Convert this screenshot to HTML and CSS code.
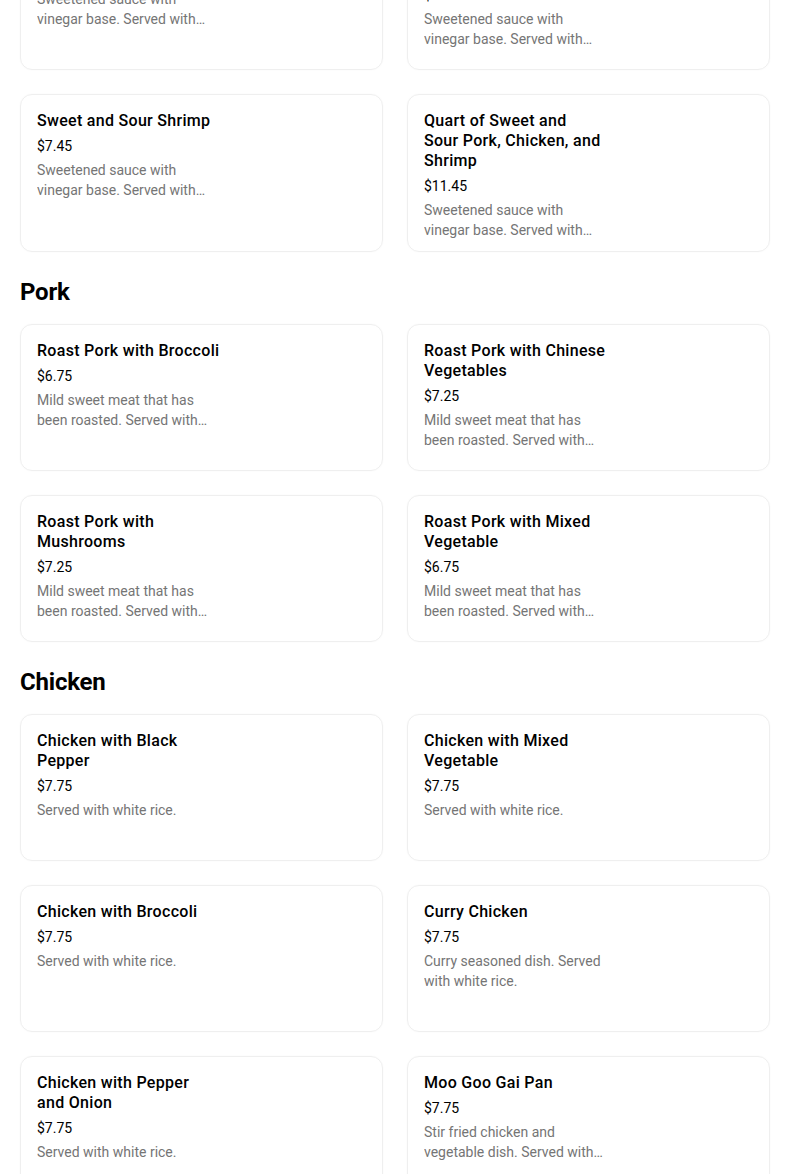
FILE: index.html
```html
<!DOCTYPE html>
<html lang="en">
<head>
<meta charset="utf-8">
<title>Menu</title>
<link rel="stylesheet" href="styles.css">
</head>
<body>
<main class="menu">
  <section class="section">
    <h2 class="section-title">Sweet and Sour</h2>
    <div class="grid">
      <article class="card"><div class="info"><h3 class="name">Sweet and Sour Pork</h3><p class="price">$7.45</p><p class="desc">Sweetened sauce with vinegar base. Served with white rice.</p></div></article>
      <article class="card"><div class="info"><h3 class="name">Sweet and Sour Chicken and Shrimp</h3><p class="price">$7.45</p><p class="desc">Sweetened sauce with vinegar base. Served with white rice.</p></div></article>
      <article class="card"><div class="info"><h3 class="name">Sweet and Sour Shrimp</h3><p class="price">$7.45</p><p class="desc">Sweetened sauce with vinegar base. Served with white rice.</p></div></article>
      <article class="card"><div class="info"><h3 class="name">Quart of Sweet and<br>Sour Pork, Chicken, and Shrimp</h3><p class="price">$11.45</p><p class="desc">Sweetened sauce with vinegar base. Served with white rice.</p></div></article>
    </div>
  </section>
  <section class="section">
    <h2 class="section-title">Pork</h2>
    <div class="grid">
      <article class="card"><div class="info"><h3 class="name">Roast Pork with Broccoli</h3><p class="price">$6.75</p><p class="desc">Mild sweet meat that has been roasted. Served with white rice.</p></div></article>
      <article class="card"><div class="info"><h3 class="name">Roast Pork with Chinese Vegetables</h3><p class="price">$7.25</p><p class="desc">Mild sweet meat that has been roasted. Served with white rice.</p></div></article>
      <article class="card"><div class="info"><h3 class="name">Roast Pork with Mushrooms</h3><p class="price">$7.25</p><p class="desc">Mild sweet meat that has been roasted. Served with white rice.</p></div></article>
      <article class="card"><div class="info"><h3 class="name">Roast Pork with Mixed Vegetable</h3><p class="price">$6.75</p><p class="desc">Mild sweet meat that has been roasted. Served with white rice.</p></div></article>
    </div>
  </section>
  <section class="section">
    <h2 class="section-title">Chicken</h2>
    <div class="grid">
      <article class="card"><div class="info"><h3 class="name">Chicken with Black Pepper</h3><p class="price">$7.75</p><p class="desc">Served with white rice.</p></div></article>
      <article class="card"><div class="info"><h3 class="name">Chicken with Mixed Vegetable</h3><p class="price">$7.75</p><p class="desc">Served with white rice.</p></div></article>
      <article class="card"><div class="info"><h3 class="name">Chicken with Broccoli</h3><p class="price">$7.75</p><p class="desc">Served with white rice.</p></div></article>
      <article class="card"><div class="info"><h3 class="name">Curry Chicken</h3><p class="price">$7.75</p><p class="desc">Curry seasoned dish. Served with white rice.</p></div></article>
      <article class="card"><div class="info"><h3 class="name">Chicken with Pepper<br>and Onion</h3><p class="price">$7.75</p><p class="desc">Served with white rice.</p></div></article>
      <article class="card"><div class="info"><h3 class="name">Moo Goo Gai Pan</h3><p class="price">$7.75</p><p class="desc">Stir fried chicken and vegetable dish. Served with white rice.</p></div></article>
    </div>
  </section>
</main>
</body>
</html>
```
FILE: styles.css
```css
* { box-sizing: border-box; }
html, body { margin: 0; padding: 0; background: #fff; }
body {
  font-family: Roboto, "Noto Sans", "Liberation Sans", sans-serif;
  color: #000;
  overflow: hidden;
}
.menu {
  width: 750px;
  margin-left: 20px;
  margin-top: -125px;
  display: flex;
  flex-direction: column;
  gap: 24px;
}
.section-title {
  margin: 0 0 16px;
  font-size: 24px;
  line-height: 32px;
  font-weight: 700;
  letter-spacing: -0.2px;
}
.grid {
  display: grid;
  grid-template-columns: 1fr 1fr;
  column-gap: 24px;
  row-gap: 24px;
}
.card {
  min-height: 147px;
  border: 1px solid #efefef;
  border-radius: 12px;
  box-shadow: 0 0 2px rgba(0,0,0,0.03);
  padding: 16px 16px 11px;
}
.info { width: 186px; }
.name {
  margin: 0;
  font-size: 16px;
  line-height: 20px;
  font-weight: 500;
  letter-spacing: 0.3px;
}
.price {
  margin: 5px 0 0;
  font-size: 14px;
  line-height: 20px;
}
.desc {
  margin: 4px 0 0;
  font-size: 14px;
  line-height: 20px;
  color: #757575;
  display: -webkit-box;
  -webkit-line-clamp: 2;
  -webkit-box-orient: vertical;
  overflow: hidden;
}
```
